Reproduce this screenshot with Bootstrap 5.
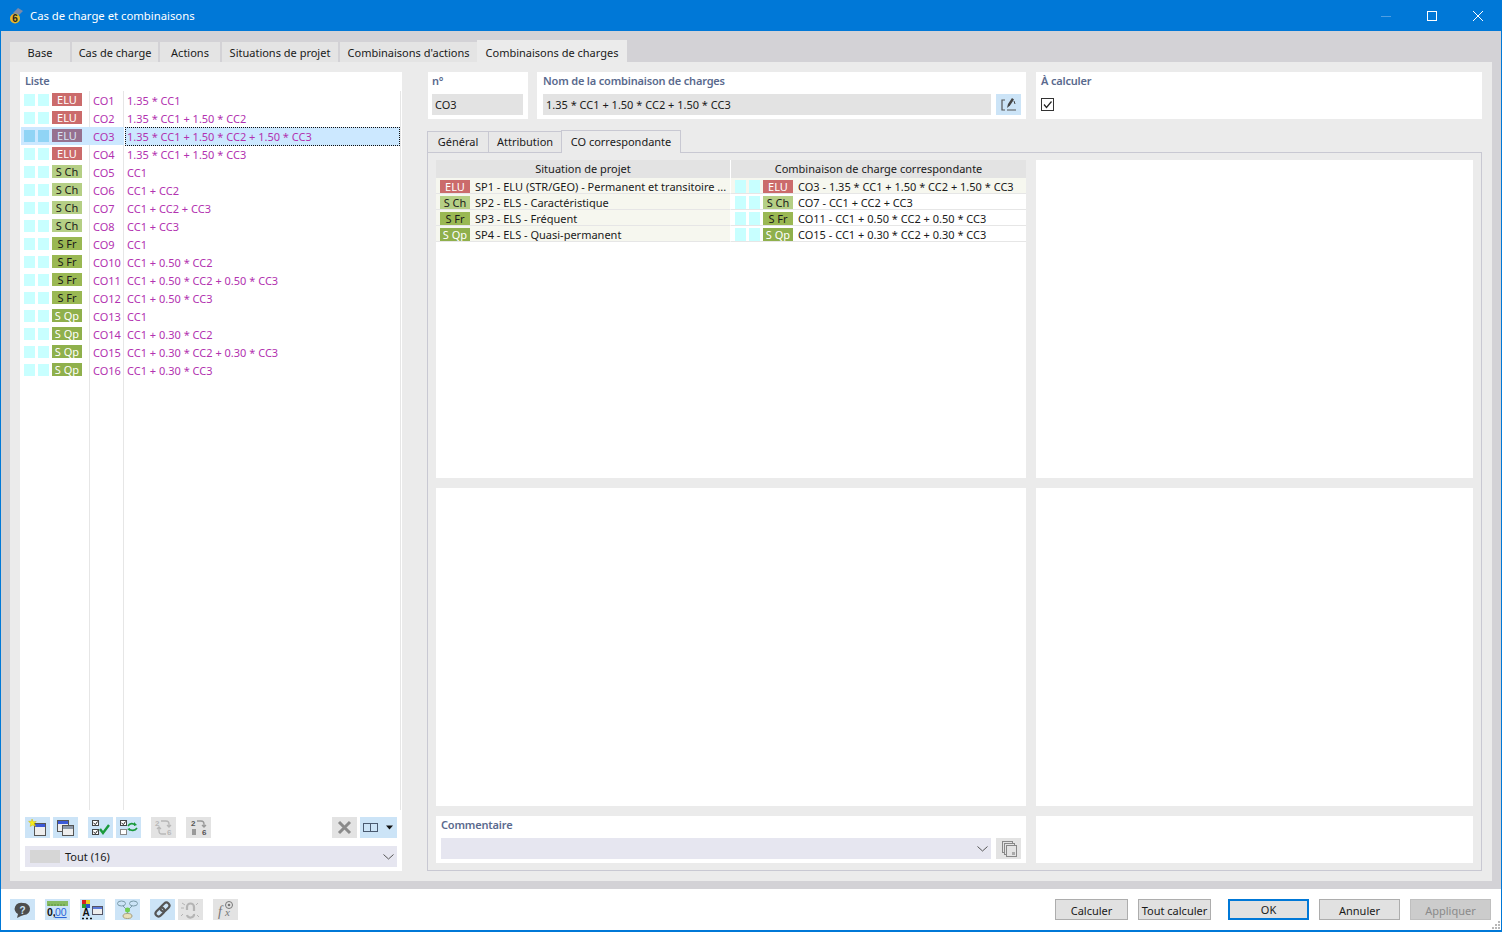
<!DOCTYPE html>
<html lang="fr">
<head>
<meta charset="utf-8">
<title>Cas de charge et combinaisons</title>
<link href="https://cdn.jsdelivr.net/npm/bootstrap@5.3.0/dist/css/bootstrap.min.css" rel="stylesheet">
<style>
html,body{height:100%;margin:0;overflow:hidden}
body{font-family:"Noto Sans","Open Sans",sans-serif;font-size:11px;line-height:16px;color:#1a1a1a;background:#fff}
.win{width:1502px;height:932px;display:flex;flex-direction:column;border:1px solid #0078d7;border-top:0;border-bottom:2px solid #0078d7}
.titlebar{height:31px;background:#0078d7;color:#fff;font-size:11.300px;margin:0 -1px;padding:0 0 0 9px;flex:none}
.titlebar .ttl{margin-left:7px}
.winbtns{margin-left:auto;margin-right:1px;display:flex}
.winbtns span{width:46px;height:31px;display:flex;align-items:center;justify-content:center}
.shell{flex:1;background:#d3d2d6;display:flex;flex-direction:column;padding:11px 9px 8px;min-height:0}
.maintabs{display:flex;height:20px;gap:2px;flex:none;align-items:flex-end}
.mtab{height:20px;background:#e4e4e4;display:flex;align-items:center;justify-content:center;flex:none;padding-top:2px}
.mtab.on{height:22px;background:#ebebeb;margin-left:-2px;padding-top:4px}
.stage{flex:1;background:#ebebeb;display:flex;padding:10px;gap:25px;min-height:0}
.listbox{width:382px;flex:none;background:#fff;display:flex;flex-direction:column;padding:0 1px 4px 0}
.boxlabel{color:#5a6a8e;font-weight:600;letter-spacing:-.18px;height:19px;line-height:18px;padding-left:5px;flex:none}
.rows{flex:1;display:flex;flex-direction:column;min-height:0;border-right:1px solid #e6e6e6;background:linear-gradient(#e6e6e6,#e6e6e6) 69px 0/1px 100% no-repeat,linear-gradient(#e6e6e6,#e6e6e6) 103px 0/1px 100% no-repeat}
.lrow{height:18px;display:flex;align-items:flex-start;color:#b232b0;flex:none}
.lrow.sel{background:linear-gradient(#cce8ff,#cce8ff) 1px 0/103px 18px no-repeat}
.sw{width:11px;height:12px;background:#c8ffff;margin-right:3px;flex:none;margin-top:3px}
.tagbox{width:30px;height:13px;line-height:13px;text-align:center;margin-top:2px;flex:none;font-size:11px}
.t-elu{background:#cb6b6b;color:#fff}
.t-sch{background:#b5cf85;color:#1a1a1a}
.t-sfr{background:#9ab853;color:#1a1a1a}
.t-sqp{background:#8fb04c;color:#fff}
.sel .sw{background:#90d4f5}
.sel .t-elu{background:#96718f;color:#d8e4f5}
.cocol{flex:none;width:41px;padding-left:11px;padding-top:1px;line-height:18px}
.cocol2{line-height:18px;flex:1;padding:1px 0 0 4px}
.sel .cocol2{background:#cce8ff;outline:1px dotted #111;outline-offset:-1px;margin-left:2px;padding-left:2px}
.tools{display:flex;align-items:center;height:21px;margin:7px 0 8px 5px;flex:none}
.ib{width:25px;height:21px;padding:0;border:0;border-radius:0;display:inline-flex;align-items:center;justify-content:center;background:#cce4f7;flex:none}
.ib.off{background:#e3e3e3}
.ib svg{display:block}
.combo{height:21px;background:#e6e6f0;display:flex;align-items:center;margin:0 4px 0 5px;padding:0 3px 0 5px;flex:none}
.greybar{width:30px;height:13px;background:#d6d6d6;margin-right:5px}
.chev{margin-left:auto}
.rcol{flex:1;display:flex;flex-direction:column;min-width:0}
.toprow{display:flex;height:47px;flex:none;margin-left:1px}
.tb{background:#fff;padding:0 5px 0 6px;flex:none}
.tb.nbox{padding-left:4px}
.tb .boxlabel{padding-left:0;height:22px}
.fld{height:21px;background:#e3e3e3;padding-left:3px;line-height:21px;flex:none}
.subtabs{display:flex;height:22px;margin-top:11px;flex:none;align-items:flex-end}
.stab{height:21px;border:1px solid #c8c8d2;border-bottom:0;display:flex;align-items:center;justify-content:center;margin-right:-1px;background:#e8e8e8}
.stab.on{height:23px;background:#ebebeb;position:relative;z-index:1;margin-bottom:-1px}
.subpanel{flex:1;border:1px solid #c8c8d2;padding:7px 8px;display:grid;grid-template-columns:590px 437px;grid-template-rows:318px 318px 47px;gap:10px;min-height:0}
.pane{background:#fff;min-width:0}
.cmt{padding:0 5px}
.cmt .boxlabel{padding-left:0;height:22px}
.mt-tbl{width:590px;table-layout:fixed;border-collapse:separate;border-spacing:0;margin:0;font-size:11px;line-height:13px;--bs-table-bg:transparent;--bs-table-color:#1a1a1a}
.mt-tbl>thead{vertical-align:middle}
.mt-tbl th{height:18px;background:#e3e3e3;font-weight:400;text-align:center;padding:0 0 1px;border:0;border-right:1px solid #fff;color:#1a1a1a;vertical-align:middle;line-height:15px}
.mt-tbl th:last-child,.mt-tbl td:last-child{border-right:0}
.mt-tbl td{height:16px;padding:0;border:0;border-bottom:1px solid #e6e6e6;border-right:1px solid #fff;white-space:nowrap;overflow:hidden}
.mt-tbl .lc{background:#f6f7ef}
.mt-tbl tr:first-child .rc{background:#f6f7ef}
.cell{display:flex;align-items:flex-start;height:15px;padding-top:2px}
.cell .tagbox{margin:0 5px 0 0;height:13px;line-height:13px}
.cell .sw{height:13px;margin:0 3px 0 0;width:11px}
.cell .sw:first-child{margin-left:4px}
.lc .cell .tagbox{margin-left:4px}
.botbar{height:41px;background:#fff;display:flex;align-items:center;padding:0 10px 0 9px;flex:none;position:relative}
.dbtn{height:21px;width:81px;padding:2px 0 0;background:#e1e1e1;border:1px solid #adadad;border-radius:0;font-size:11px;line-height:16px;color:#1a1a1a;flex:none;margin-left:10px;font-family:inherit}
.dbtn.sm{width:73px}
.dbtn.ok{border:2px solid #0078d7;padding-top:1px}
.dbtn.dis{background:#ccc;color:#8a8a8a;border-color:#bfbfbf}
.grip{position:absolute;right:1px;bottom:1px}
</style>
</head>
<body>
<div class="win">
  <div class="titlebar d-flex align-items-center">
    <svg width="14" height="16" viewBox="0 0 14 16"><path d="M4 5 L9 0 L14 3 L10 7Z" fill="#7d8aa8"/><circle cx="6" cy="10.500" r="5" fill="#e8b82a"/><text x="6" y="14" font-size="10" font-weight="700" text-anchor="middle" fill="#222" font-family="Liberation Sans">6</text></svg>
    <span class="ttl">Cas de charge et combinaisons</span>
    <div class="winbtns">
      <span><svg width="10" height="10"><path d="M0 5.500H10" stroke="#4f9fe3"/></svg></span>
      <span><svg width="10" height="10"><rect x=".5" y=".5" width="9" height="9" fill="none" stroke="#fff"/></svg></span>
      <span><svg width="10" height="10"><path d="M0 0L10 10M10 0L0 10" stroke="#fff"/></svg></span>
    </div>
  </div>
  <div class="shell">
    <div class="maintabs">
      <div class="mtab" style="width:60px">Base</div>
      <div class="mtab" style="width:86px">Cas de charge</div>
      <div class="mtab" style="width:60px">Actions</div>
      <div class="mtab" style="width:116px">Situations de projet</div>
      <div class="mtab" style="width:137px">Combinaisons d'actions</div>
      <div class="mtab on" style="width:150px">Combinaisons de charges</div>
    </div>
    <div class="stage">
      <div class="listbox">
        <div class="boxlabel">Liste</div>
        <div class="rows">
          <div class="lrow"><i class="sw ms-1"></i><i class="sw"></i><span class="tagbox t-elu">ELU</span><span class="cocol">CO1</span><span class="cocol2">1.35 * CC1</span></div>
          <div class="lrow"><i class="sw ms-1"></i><i class="sw"></i><span class="tagbox t-elu">ELU</span><span class="cocol">CO2</span><span class="cocol2">1.35 * CC1 + 1.50 * CC2</span></div>
          <div class="lrow sel"><i class="sw ms-1"></i><i class="sw"></i><span class="tagbox t-elu">ELU</span><span class="cocol">CO3</span><span class="cocol2">1.35 * CC1 + 1.50 * CC2 + 1.50 * CC3</span></div>
          <div class="lrow"><i class="sw ms-1"></i><i class="sw"></i><span class="tagbox t-elu">ELU</span><span class="cocol">CO4</span><span class="cocol2">1.35 * CC1 + 1.50 * CC3</span></div>
          <div class="lrow"><i class="sw ms-1"></i><i class="sw"></i><span class="tagbox t-sch">S Ch</span><span class="cocol">CO5</span><span class="cocol2">CC1</span></div>
          <div class="lrow"><i class="sw ms-1"></i><i class="sw"></i><span class="tagbox t-sch">S Ch</span><span class="cocol">CO6</span><span class="cocol2">CC1 + CC2</span></div>
          <div class="lrow"><i class="sw ms-1"></i><i class="sw"></i><span class="tagbox t-sch">S Ch</span><span class="cocol">CO7</span><span class="cocol2">CC1 + CC2 + CC3</span></div>
          <div class="lrow"><i class="sw ms-1"></i><i class="sw"></i><span class="tagbox t-sch">S Ch</span><span class="cocol">CO8</span><span class="cocol2">CC1 + CC3</span></div>
          <div class="lrow"><i class="sw ms-1"></i><i class="sw"></i><span class="tagbox t-sfr">S Fr</span><span class="cocol">CO9</span><span class="cocol2">CC1</span></div>
          <div class="lrow"><i class="sw ms-1"></i><i class="sw"></i><span class="tagbox t-sfr">S Fr</span><span class="cocol">CO10</span><span class="cocol2">CC1 + 0.50 * CC2</span></div>
          <div class="lrow"><i class="sw ms-1"></i><i class="sw"></i><span class="tagbox t-sfr">S Fr</span><span class="cocol">CO11</span><span class="cocol2">CC1 + 0.50 * CC2 + 0.50 * CC3</span></div>
          <div class="lrow"><i class="sw ms-1"></i><i class="sw"></i><span class="tagbox t-sfr">S Fr</span><span class="cocol">CO12</span><span class="cocol2">CC1 + 0.50 * CC3</span></div>
          <div class="lrow"><i class="sw ms-1"></i><i class="sw"></i><span class="tagbox t-sqp">S Qp</span><span class="cocol">CO13</span><span class="cocol2">CC1</span></div>
          <div class="lrow"><i class="sw ms-1"></i><i class="sw"></i><span class="tagbox t-sqp">S Qp</span><span class="cocol">CO14</span><span class="cocol2">CC1 + 0.30 * CC2</span></div>
          <div class="lrow"><i class="sw ms-1"></i><i class="sw"></i><span class="tagbox t-sqp">S Qp</span><span class="cocol">CO15</span><span class="cocol2">CC1 + 0.30 * CC2 + 0.30 * CC3</span></div>
          <div class="lrow"><i class="sw ms-1"></i><i class="sw"></i><span class="tagbox t-sqp">S Qp</span><span class="cocol">CO16</span><span class="cocol2">CC1 + 0.30 * CC3</span></div>
        </div>
        <div class="tools">
          <button class="btn ib"><svg width="21" height="19" viewBox="0 0 21 19"><rect x="7.500" y="5.500" width="11" height="12" fill="#eee" stroke="#555"/><rect x="8" y="6" width="10" height="3" fill="#3c5ad8"/><path d="M5 1l1.200 2.800 3-.4-2 2.200 1.400 2.700L5.800 7 3.200 8.400l.7-3L1.600 3.400l3-.2z" fill="#f8ee20" stroke="#c8b400" stroke-width=".5"/></svg></button>
          <button class="btn ib" style="margin-left:3px"><svg width="21" height="19" viewBox="0 0 21 19"><rect x="2.500" y="2.500" width="11" height="11" fill="#eee" stroke="#555"/><rect x="3" y="3" width="10" height="3" fill="#3c5ad8"/><rect x="7.500" y="7.500" width="11" height="10" fill="#eee" stroke="#555"/><rect x="8" y="8" width="10" height="3" fill="#8c98a8"/></svg></button>
          <button class="btn ib" style="margin-left:10px"><svg width="21" height="19" viewBox="0 0 21 19"><rect x="2.500" y="2.500" width="6" height="5" fill="#fff" stroke="#444"/><path d="M3.500 5l2 1.500 2-3" fill="none" stroke="#222"/><rect x="2.500" y="11.500" width="6" height="5" fill="#fff" stroke="#444"/><path d="M3.500 14l2 1.500 2-3" fill="none" stroke="#222"/><path d="M10 11l3 4 6-8" fill="none" stroke="#1a9a3c" stroke-width="2.400"/></svg></button>
          <button class="btn ib" style="margin-left:3px"><svg width="21" height="19" viewBox="0 0 21 19"><rect x="2.500" y="2.500" width="6" height="5" fill="#fff" stroke="#444"/><path d="M3.500 5l2 1.500 2-3" fill="none" stroke="#222"/><rect x="2.500" y="11.500" width="6" height="5" fill="#fff" stroke="#888"/><path d="M10 8c2-3 5-3 7-1M19 10c-2 3-6 3-8 1" fill="none" stroke="#1a9a3c" stroke-width="1.600"/><path d="M16 4l3 3-3 1zM12 13l-3-2 3-1z" fill="#1a9a3c"/></svg></button>
          <button class="btn ib off" style="margin-left:10px"><svg width="21" height="19" viewBox="0 0 21 19"><text x="2" y="8" font-size="8" font-weight="700" fill="#b8b8b8" font-family="Liberation Sans">2</text><text x="14" y="17" font-size="8" font-weight="700" fill="#b8b8b8" font-family="Liberation Sans">6</text><path d="M8 3h5c2 0 3 1 3 3v2M14 7l2 2 2-2M13 16H9c-2 0-3-1-3-3v-3M4 11l2-2 2 2" fill="none" stroke="#b8b8b8" stroke-width="1.300"/></svg></button>
          <button class="btn ib off" style="margin-left:10px"><svg width="21" height="19" viewBox="0 0 21 19"><text x="3" y="8" font-size="8" font-weight="700" fill="#555" font-family="Liberation Sans">2</text><text x="14" y="17" font-size="8" font-weight="700" fill="#555" font-family="Liberation Sans">6</text><rect x="4" y="11" width="4" height="6" fill="#999"/><path d="M9 3h4c2 0 3 1 3 3v2M14 7l2 2 2-2" fill="none" stroke="#999" stroke-width="1.300"/></svg></button>
          <button class="btn ib off" style="margin-left:121px"><svg width="21" height="19" viewBox="0 0 21 19"><path d="M5 4l11 11M16 4L5 15" stroke="#8a8a8a" stroke-width="3"/></svg></button>
          <button class="btn ib" style="margin-left:3px;width:37px"><svg width="37" height="21" viewBox="0 0 37 21"><rect x="3.500" y="6.500" width="7" height="8" fill="none" stroke="#4a5a70"/><rect x="10.500" y="6.500" width="7" height="8" fill="none" stroke="#4a5a70"/><path d="M26 8.500h7l-3.500 4z" fill="#111"/></svg></button>
        </div>
        <div class="combo"><span class="greybar"></span>Tout (16)<svg class="chev" width="11" height="6" viewBox="0 0 11 6"><path d="M.5.500l5 4.500 5-4.500" fill="none" stroke="#555"/></svg></div>
      </div>
      <div class="rcol">
        <div class="toprow">
          <div class="tb nbox" style="width:100px"><div class="boxlabel">n°</div><div class="fld">CO3</div></div>
          <div class="tb d-flex flex-column" style="width:489px;margin-left:9px"><div class="boxlabel">Nom de la combinaison de charges</div>
            <div class="d-flex"><div class="fld flex-grow-1">1.35 * CC1 + 1.50 * CC2 + 1.50 * CC3</div><button class="btn ib" style="margin-left:5px"><svg width="19" height="17" viewBox="0 0 19 17"><path d="M6 4H3v10h3M8 14h9" fill="none" stroke="#555" stroke-width="1.200"/><path d="M8 12l1-4 4-6 2 1.500-4 6z" fill="#444"/><path d="M15 5l1 3" stroke="#444"/></svg></button></div></div>
          <div class="tb" style="width:446px;margin-left:10px;padding-left:5px"><div class="boxlabel">À calculer</div>
            <svg width="14" height="14" viewBox="0 0 14 14" style="display:block;margin-top:4px"><rect x=".5" y=".5" width="12" height="12" fill="#fff" stroke="#333"/><path d="M3 6.500l2.500 3 5-6" fill="none" stroke="#222" stroke-width="1.200"/></svg></div>
        </div>
        <div class="subtabs">
          <div class="stab" style="width:62px">Général</div>
          <div class="stab" style="width:74px">Attribution</div>
          <div class="stab on" style="width:120px">CO correspondante</div>
        </div>
        <div class="subpanel">
          <div class="pane">
            <table class="table mt-tbl">
              <colgroup><col style="width:295px"><col style="width:295px"></colgroup>
              <thead><tr><th>Situation de projet</th><th>Combinaison de charge correspondante</th></tr></thead>
              <tbody>
                <tr><td class="lc"><div class="cell"><span class="tagbox t-elu">ELU</span>SP1 - ELU (STR/GEO) - Permanent et transitoire ...</div></td><td class="rc"><div class="cell"><i class="sw"></i><i class="sw"></i><span class="tagbox t-elu">ELU</span>CO3 - 1.35 * CC1 + 1.50 * CC2 + 1.50 * CC3</div></td></tr>
                <tr><td class="lc"><div class="cell"><span class="tagbox t-sch">S Ch</span>SP2 - ELS - Caractéristique</div></td><td class="rc"><div class="cell"><i class="sw"></i><i class="sw"></i><span class="tagbox t-sch">S Ch</span>CO7 - CC1 + CC2 + CC3</div></td></tr>
                <tr><td class="lc"><div class="cell"><span class="tagbox t-sfr">S Fr</span>SP3 - ELS - Fréquent</div></td><td class="rc"><div class="cell"><i class="sw"></i><i class="sw"></i><span class="tagbox t-sfr">S Fr</span>CO11 - CC1 + 0.50 * CC2 + 0.50 * CC3</div></td></tr>
                <tr><td class="lc"><div class="cell"><span class="tagbox t-sqp">S Qp</span>SP4 - ELS - Quasi-permanent</div></td><td class="rc"><div class="cell"><i class="sw"></i><i class="sw"></i><span class="tagbox t-sqp">S Qp</span>CO15 - CC1 + 0.30 * CC2 + 0.30 * CC3</div></td></tr>
              </tbody>
            </table>
          </div>
          <div class="pane"></div>
          <div class="pane"></div>
          <div class="pane"></div>
          <div class="pane cmt"><div class="boxlabel">Commentaire</div>
            <div class="d-flex"><div class="combo flex-grow-1 m-0"><svg class="chev" width="11" height="6" viewBox="0 0 11 6"><path d="M.5.500l5 4.500 5-4.500" fill="none" stroke="#555"/></svg></div><button class="btn ib off" style="margin-left:5px"><svg width="19" height="18" viewBox="0 0 19 18"><rect x="3.500" y="1.500" width="10" height="11" fill="none" stroke="#888"/><rect x="5.500" y="3.500" width="10" height="11" fill="#e3e3e3" stroke="#888"/><rect x="7.500" y="5.500" width="10" height="11" fill="#e3e3e3" stroke="#888"/><rect x="13" y="12" width="3" height="3" fill="#aaa"/></svg></button></div></div>
          <div class="pane"></div>
        </div>
      </div>
    </div>
  </div>
  <div class="botbar">
    <button class="btn ib"><svg width="21" height="19" viewBox="0 0 21 19"><path d="M11 3a6.500 6 0 0 1 1 12l-3 1-4 2 1-4A6.500 6 0 0 1 11 3z" fill="#4d4d4d"/><text x="10.500" y="13.500" font-size="10" font-weight="700" text-anchor="middle" fill="#cce4f7" font-family="Liberation Sans">?</text></svg></button>
    <button class="btn ib" style="margin-left:10px"><svg width="23" height="20" viewBox="0 0 23 20"><rect x="1" y="1" width="21" height="5" fill="#86bb62"/><path d="M3 4v2M6 4v2M9 4v2M12 4v2M15 4v2M18 4v2" stroke="#4f8a36" stroke-width=".8"/><text x="1" y="16" font-size="10.500" font-weight="700" fill="#111" font-family="Liberation Sans">0,</text><text x="9" y="16" font-size="10.500" fill="#2a66d8" font-family="Liberation Sans" text-decoration="underline">00</text></svg></button>
    <button class="btn ib" style="margin-left:10px"><svg width="23" height="21" viewBox="0 0 23 21"><rect x="1" y="1" width="4" height="4" fill="#d82020"/><rect x="5" y="1" width="4" height="4" fill="#e8d020"/><rect x="1" y="5" width="4" height="4" fill="#2a9a30"/><rect x="5" y="5" width="4" height="4" fill="#2a50d0"/><text x="1.500" y="17" font-size="10" font-weight="700" fill="#111" font-family="Liberation Sans">A</text><path d="M1 19.500h2M5 19.500h2M9 19.500h2" stroke="#111" stroke-width="1.500"/><rect x="11.500" y="7.500" width="10" height="8" fill="#eee" stroke="#556"/><rect x="12" y="8" width="9" height="2" fill="#5a7ad8"/></svg></button>
    <button class="btn ib" style="margin-left:10px"><svg width="23" height="20" viewBox="0 0 23 20"><ellipse cx="5.500" cy="3.500" rx="4" ry="2.500" fill="#cce4f7" stroke="#7a9aa8"/><ellipse cx="17.500" cy="3.500" rx="4" ry="2.500" fill="#cce4f7" stroke="#7a9aa8"/><path d="M7 6l4 4M16 6l-4 4M11.500 11v3" stroke="#7a9aa8"/><circle cx="11.500" cy="10" r="2.500" fill="#70d050"/><ellipse cx="11.500" cy="16" rx="4.500" ry="2.500" fill="#e8e0b8" stroke="#a8a080"/></svg></button>
    <button class="btn ib" style="margin-left:10px"><svg width="21" height="19" viewBox="0 0 21 19"><g fill="none" stroke="#555" stroke-width="2.200" transform="rotate(-45 10.500 9.500)"><rect x="2" y="6.500" width="10" height="6" rx="3"/><rect x="9" y="6.500" width="10" height="6" rx="3"/></g></svg></button>
    <button class="btn ib off" style="margin-left:3px"><svg width="21" height="19" viewBox="0 0 21 19"><path d="M7 10V7a3.500 3.500 0 0 1 7 0v4M14 14a3.500 3 0 0 1-7 1" fill="none" stroke="#b4b4b4" stroke-width="2.200"/><path d="M2 3l3 2M1 8h3M18 3l-2 2M17 15l2 2M3 14l-2 2" stroke="#b4b4b4"/></svg></button>
    <button class="btn ib off" style="margin-left:10px"><svg width="21" height="19" viewBox="0 0 21 19"><text x="3" y="16" font-size="14" font-style="italic" fill="#777" font-family="Liberation Serif">f</text><text x="10" y="16" font-size="11" font-style="italic" fill="#777" font-family="Liberation Serif">x</text><circle cx="14" cy="5" r="3.500" fill="none" stroke="#777"/><circle cx="14" cy="5" r="1.300" fill="#777"/></svg></button>
    <div class="ms-auto d-flex">
      <button class="btn dbtn sm">Calculer</button>
      <button class="btn dbtn sm">Tout calculer</button>
      <button class="btn dbtn ok" style="margin-left:17px">OK</button>
      <button class="btn dbtn">Annuler</button>
      <button class="btn dbtn dis">Appliquer</button>
    </div>
    <svg class="grip" width="9" height="9" viewBox="0 0 9 9"><path d="M7 1h2v2H7zM4 4h2v2H4zM7 4h2v2H7zM1 7h2v2H1zM4 7h2v2H4zM7 7h2v2H7z" fill="#b8b8b8"/></svg>
  </div>
</div>
<script src="https://cdn.jsdelivr.net/npm/bootstrap@5.3.0/dist/js/bootstrap.bundle.min.js"></script>
</body>
</html>
